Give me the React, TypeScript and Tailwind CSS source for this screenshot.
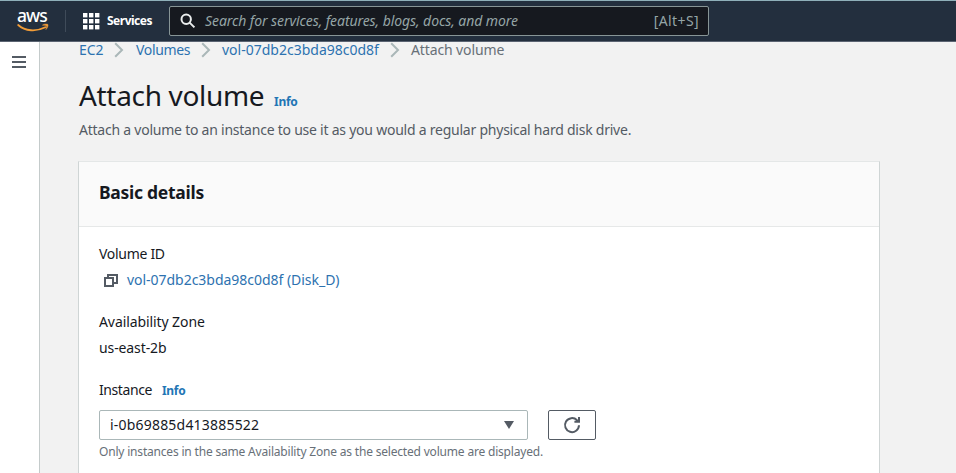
function AwsLogo() {
  return (
    <div className="relative h-[24px] w-[32px]">
      <div className="pl-px text-[17.5px] font-medium leading-[22px] -mt-[5px] tracking-[-0.9px] text-white">aws</div>
      <svg width="32" height="10" viewBox="0 14 32 10" className="absolute left-[0.5px] top-[14px] block">
        <path d="M1.2 16 C8 22.4 19.5 22.8 28.4 18.3" fill="none" stroke="#f29d38" strokeWidth="1.8" strokeLinecap="round" />
        <path d="M25.6 15.9 C27.6 14.8 30.6 15 31 15.6 C31.3 16.6 30.4 19.3 28.9 20.6 C29.4 18.9 29.9 17.5 29.5 16.9 C28.9 16.3 27.2 16.3 25.6 16.3 Z" fill="#f29d38" stroke="#f29d38" strokeWidth="0.5" />
      </svg>
    </div>
  );
}

function Chevron() {
  return (
    <svg width="10" height="16" viewBox="0 0 10 16" className="block shrink-0">
      <path d="M1.2 1.2 L8 8 L1.2 14.8" fill="none" stroke="#aab7b8" strokeWidth="2" />
    </svg>
  );
}

const gridDots = [0, 6, 12];

function TopBar() {
  return (
    <header className="flex h-[42px] items-start border-t border-b border-t-[#8fb0b9] border-b-[#5b6472] bg-[#232f3e]">
      <div className="ml-4 mt-[8px] flex">
        <AwsLogo />
      </div>
      <div className="ml-[17px] mt-[9px] h-[22px] w-px bg-[#3f4b59]" />
      <svg width="17" height="17" viewBox="0 0 17 17" className="ml-[17px] mt-[12px] block" fill="#ffffff">
        {gridDots.map((y) => gridDots.map((x) => <rect key={`${x}-${y}`} x={x} y={y} width="4.4" height="4.4" />))}
      </svg>
      <span className="ml-[7px] mt-[12px] w-[45px] whitespace-nowrap text-[12px] font-bold leading-4 tracking-[-0.5px] text-white">Services</span>
      <div className="ml-[17px] mt-[5px] flex h-[30px] w-[540px] items-center rounded-[2px] border border-[#879596] bg-[#16191f] pl-[10px] pr-[9px] text-[14px] leading-5 text-[#95a5a6]">
        <svg width="16" height="16" viewBox="0 0 16 16" className="block" fill="none" stroke="#eaeded" strokeWidth="2">
          <circle cx="6.2" cy="6.2" r="4.7" />
          <path d="M9.6 9.6 L14.4 14.4" />
        </svg>
        <span className="ml-[9px] whitespace-nowrap italic tracking-[-0.075px]">Search for services, features, blogs, docs, and more</span>
        <span className="ml-auto tracking-[0.4px]">[Alt+S]</span>
      </div>
    </header>
  );
}

function Breadcrumbs() {
  return (
    <nav className="flex h-4 items-center whitespace-nowrap text-[14px] leading-4 text-[#2d72b0]">
      <span className="w-[35px] tracking-[-0.1px]">EC2</span>
      <Chevron />
      <span className="ml-[12px] w-[65px] tracking-[-0.35px]">Volumes</span>
      <Chevron />
      <span className="ml-[11px] w-[168px]">vol-07db2c3bda98c0d8f</span>
      <Chevron />
      <span className="ml-[11px] tracking-[-0.12px] text-[#687078]">Attach volume</span>
    </nav>
  );
}

export default function App() {
  return (
    <div className="flex h-[473px] w-[956px] flex-col overflow-hidden bg-[#f2f2f2] font-['Noto_Sans','Open_Sans',sans-serif] text-[14px] leading-5 text-[#16191f]">
      <TopBar />
      <div className="flex min-h-0 flex-1">
        <aside className="w-[40px] shrink-0 border-r border-[#c4cbcb] bg-white pl-3 pt-[14px]">
          <div className="flex w-[14px] flex-col gap-[3px]">
            <div className="h-[2px] bg-[#545b64]" />
            <div className="h-[2px] bg-[#545b64]" />
            <div className="h-[2px] bg-[#545b64]" />
          </div>
        </aside>
        <main className="w-[840px] shrink-0 pl-[39px]">
          <Breadcrumbs />
          <div className="mt-[19px] flex items-baseline whitespace-nowrap">
            <h1 className="w-[195px] text-[28px] leading-9 tracking-[-0.32px]">Attach volume</h1>
            <a className="text-[12px] font-bold leading-4 tracking-[-0.25px] text-[#2275b5]">Info</a>
          </div>
          <p className="mt-[7px] whitespace-nowrap tracking-[-0.235px] text-[#545b64]">
            Attach a volume to an instance to use it as you would a regular physical hard disk drive.
          </p>
          <section className="-ml-px mt-[21px] h-[330px] w-[802px] border border-[#cfd5d5] border-t-[#e4e7e7] bg-white">
            <div className="h-[65px] border-b border-[#e6e8e8] bg-[#fafafa] pl-5 pt-[18px]">
              <h2 className="text-[17.5px] font-bold leading-6 tracking-[-0.28px]">Basic details</h2>
            </div>
            <div className="whitespace-nowrap pl-5 pt-[17px]">
              <div className="tracking-[-0.3px]">Volume ID</div>
              <div className="mt-[6px] flex items-center text-[#2d72b0]">
                <svg width="16" height="16" viewBox="0 0 16 16" className="ml-1 mr-2 block" fill="none" stroke="#545b64" strokeWidth="2">
                  <path d="M2 6 H10 V14 H2 Z" />
                  <path d="M5 6 V3 H14 V11 H10" />
                </svg>
                <span className="tracking-[-0.03px]">vol-07db2c3bda98c0d8f (Disk_D)</span>
              </div>
              <div className="mt-[22px] tracking-[-0.09px]">Availability Zone</div>
              <div className="mt-[6px] tracking-[-0.1px]">us-east-2b</div>
              <div className="mt-[22px] flex items-baseline">
                <span className="w-[63px] tracking-[-0.42px]">Instance</span>
                <a className="text-[12px] font-bold tracking-[-0.3px] text-[#2275b5]">Info</a>
              </div>
              <div className="mt-[9px] flex">
                <div className="flex h-[30px] w-[429px] items-center justify-between rounded-[2px] border border-[#aab7b8] pl-[10px] pr-[13px]">
                  <span className="tracking-[0.2px]">i-0b69885d413885522</span>
                  <svg width="10" height="8" viewBox="0 0 10 8" className="block">
                    <path d="M0 0 H10 L5 8 Z" fill="#545b64" />
                  </svg>
                </div>
                <button className="ml-5 flex h-[30px] w-[48px] items-center justify-center rounded-[2px] border border-[#545b64]">
                  <svg width="18" height="18" viewBox="0 0 18 18" className="block" fill="none" stroke="#545b64" strokeWidth="2">
                    <path d="M16 9.3 A7 7 0 1 1 14 4.2 L15.6 5.6" />
                    <path d="M16 1 V5.8 H11.4" />
                  </svg>
                </button>
              </div>
              <p className="mt-[4px] text-[12px] leading-4 tracking-[-0.188px] text-[#687078]">
                Only instances in the same Availability Zone as the selected volume are displayed.
              </p>
            </div>
          </section>
        </main>
      </div>
    </div>
  );
}
